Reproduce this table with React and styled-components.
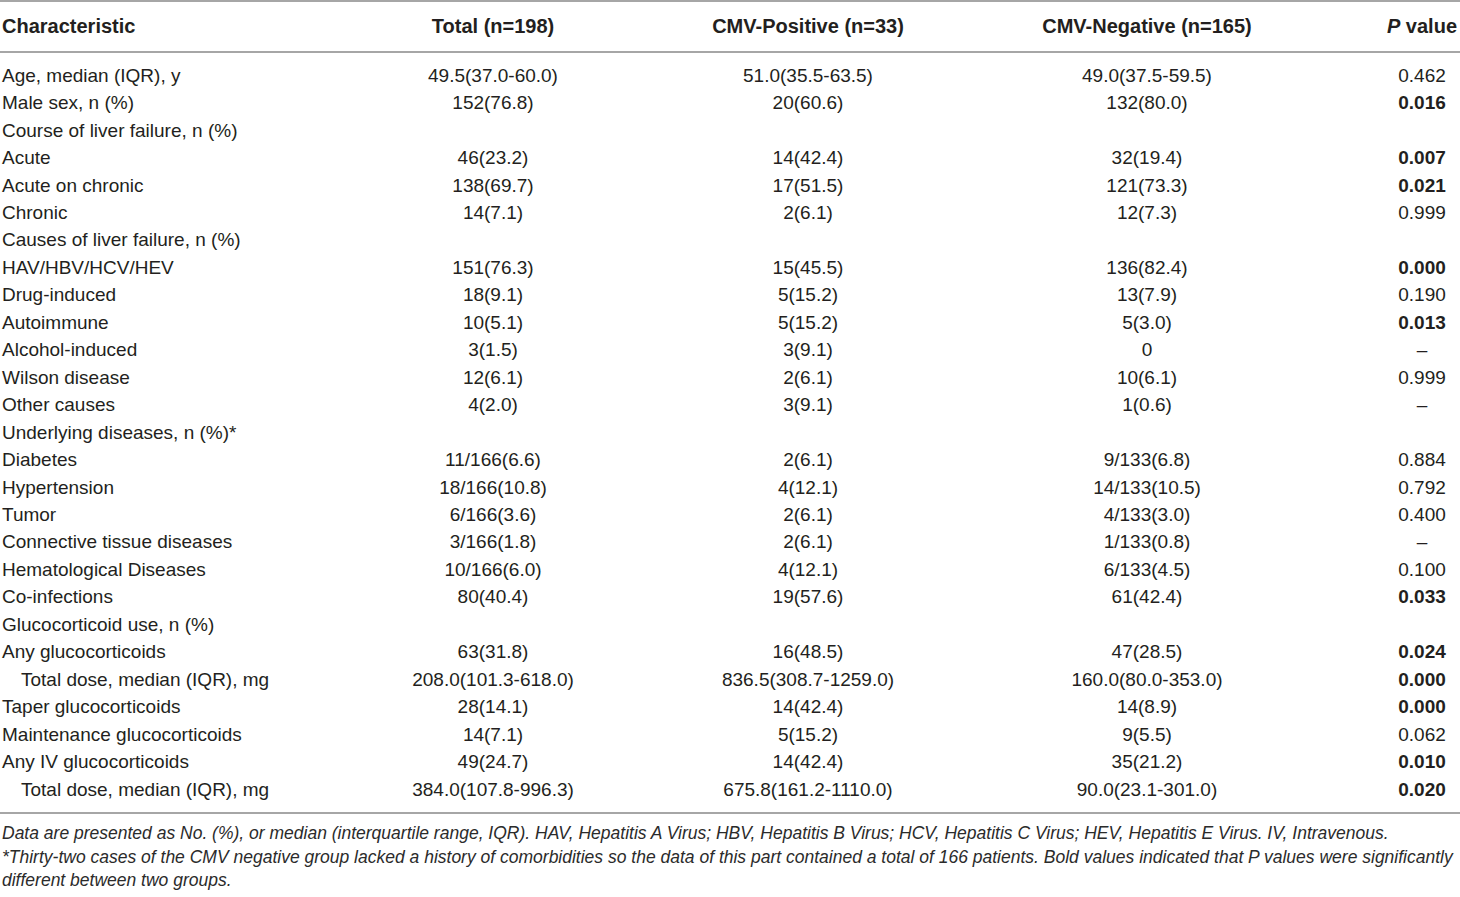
import React from 'react';
import styled, { createGlobalStyle } from 'styled-components';

const GlobalStyle = createGlobalStyle`
    body {
        margin: 0;
        background: #fff;
        font-family: "Liberation Sans", Arial, sans-serif;
        color: #231f20;
        overflow-x: hidden;
    }
`;

const cols = '280px 426px 204px 474px 76px';

const TableWrap = styled.div`
    width: 1460px;
`;

const HeadRow = styled.div`
    display: grid;
    grid-template-columns: ${cols};
    align-items: center;
    height: 49px;
    border-top: 2px solid #a6a6a6;
    border-bottom: 2px solid #a6a6a6;
    font-size: 20px;
    font-weight: bold;
`;

const Body = styled.div`
    padding: 9px 0;
    border-bottom: 2px solid #a6a6a6;
`;

const Row = styled.div`
    display: grid;
    grid-template-columns: ${cols};
    align-items: center;
    height: 27.46px;
    font-size: 19px;
`;

const Label = styled.div`
    padding-left: ${p => (p.$indent ? '21px' : '2px')};
    white-space: nowrap;
`;

const Cell = styled.div`
    justify-self: center;
    white-space: nowrap;
    font-weight: ${p => (p.$bold ? 'bold' : 'normal')};
`;

const Footnote = styled.p`
    margin: 0;
    padding: 8px 0 0 2px;
    font-size: 17.5px;
    line-height: 23.5px;
    font-style: italic;
    color: #2b2b2b;
    white-space: nowrap;
`;

const rows = [
    ['Age, median (IQR), y', '49.5(37.0-60.0)', '51.0(35.5-63.5)', '49.0(37.5-59.5)', '0.462'],
    ['Male sex, n (%)', '152(76.8)', '20(60.6)', '132(80.0)', '0.016', true],
    ['Course of liver failure, n (%)'],
    ['Acute', '46(23.2)', '14(42.4)', '32(19.4)', '0.007', true],
    ['Acute on chronic', '138(69.7)', '17(51.5)', '121(73.3)', '0.021', true],
    ['Chronic', '14(7.1)', '2(6.1)', '12(7.3)', '0.999'],
    ['Causes of liver failure, n (%)'],
    ['HAV/HBV/HCV/HEV', '151(76.3)', '15(45.5)', '136(82.4)', '0.000', true],
    ['Drug-induced', '18(9.1)', '5(15.2)', '13(7.9)', '0.190'],
    ['Autoimmune', '10(5.1)', '5(15.2)', '5(3.0)', '0.013', true],
    ['Alcohol-induced', '3(1.5)', '3(9.1)', '0', '–'],
    ['Wilson disease', '12(6.1)', '2(6.1)', '10(6.1)', '0.999'],
    ['Other causes', '4(2.0)', '3(9.1)', '1(0.6)', '–'],
    ['Underlying diseases, n (%)*'],
    ['Diabetes', '11/166(6.6)', '2(6.1)', '9/133(6.8)', '0.884'],
    ['Hypertension', '18/166(10.8)', '4(12.1)', '14/133(10.5)', '0.792'],
    ['Tumor', '6/166(3.6)', '2(6.1)', '4/133(3.0)', '0.400'],
    ['Connective tissue diseases', '3/166(1.8)', '2(6.1)', '1/133(0.8)', '–'],
    ['Hematological Diseases', '10/166(6.0)', '4(12.1)', '6/133(4.5)', '0.100'],
    ['Co-infections', '80(40.4)', '19(57.6)', '61(42.4)', '0.033', true],
    ['Glucocorticoid use, n (%)'],
    ['Any glucocorticoids', '63(31.8)', '16(48.5)', '47(28.5)', '0.024', true],
    ['Total dose, median (IQR), mg', '208.0(101.3-618.0)', '836.5(308.7-1259.0)', '160.0(80.0-353.0)', '0.000', true, true],
    ['Taper glucocorticoids', '28(14.1)', '14(42.4)', '14(8.9)', '0.000', true],
    ['Maintenance glucocorticoids', '14(7.1)', '5(15.2)', '9(5.5)', '0.062'],
    ['Any IV glucocorticoids', '49(24.7)', '14(42.4)', '35(21.2)', '0.010', true],
    ['Total dose, median (IQR), mg', '384.0(107.8-996.3)', '675.8(161.2-1110.0)', '90.0(23.1-301.0)', '0.020', true, true],
];

export default function App() {
    return (
        <TableWrap>
            <GlobalStyle />
            <HeadRow>
                <Label>Characteristic</Label>
                <Cell $bold>Total (n=198)</Cell>
                <Cell $bold>CMV-Positive (n=33)</Cell>
                <Cell $bold>CMV-Negative (n=165)</Cell>
                <Cell $bold><i>P</i> value</Cell>
            </HeadRow>
            <Body>
                {rows.map(([label, total, pos, neg, p, bold, indent], i) => (
                    <Row key={i}>
                        <Label $indent={indent}>{label}</Label>
                        <Cell>{total}</Cell>
                        <Cell>{pos}</Cell>
                        <Cell>{neg}</Cell>
                        <Cell $bold={bold}>{p}</Cell>
                    </Row>
                ))}
            </Body>
            <Footnote>
                Data are presented as No. (%), or median (interquartile range, IQR). HAV, Hepatitis A Virus; HBV, Hepatitis B Virus; HCV, Hepatitis C Virus; HEV, Hepatitis E Virus. IV, Intravenous.<br />
                *Thirty-two cases of the CMV negative group lacked a history of comorbidities so the data of this part contained a total of 166 patients. Bold values indicated that P values were significantly<br />
                different between two groups.
            </Footnote>
        </TableWrap>
    );
}
